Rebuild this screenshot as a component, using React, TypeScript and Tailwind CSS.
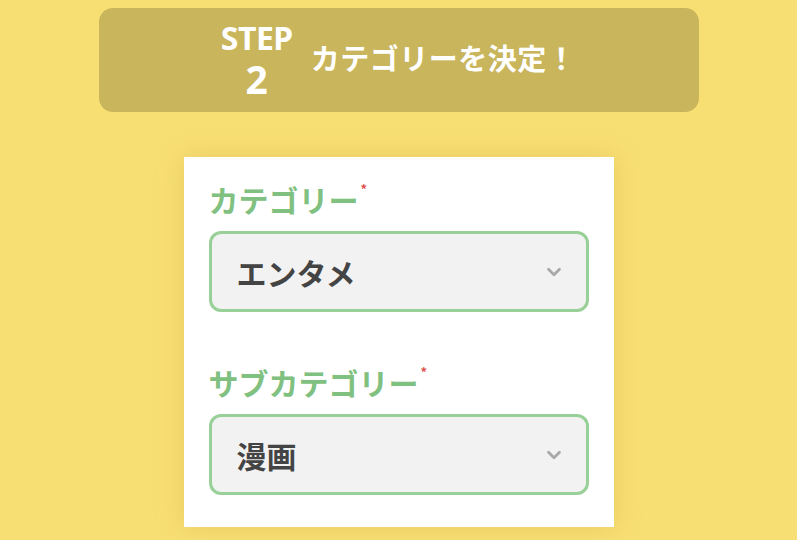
import { ChevronDown } from "lucide-react";

const jp = { fontFamily: '"Noto Sans CJK JP", "Noto Sans", sans-serif' };

function Field({ label, value }: { label: string; value: string }) {
  return (
    <div className="flex flex-col">
      <div className="flex items-start">
        <span className="text-[30px] font-bold leading-[36px] text-[#80c080]">{label}</span>
        <span className="text-[13px] font-bold leading-none text-[#e05050] mt-[1px] ml-[2px]">*</span>
      </div>
      <div className="mt-[14px] h-[81px] rounded-[12px] border-[3px] border-[#98d098] bg-[#f2f2f2] flex items-center justify-between pl-[25px] pr-[21px]">
        <span className="text-[30px] font-bold text-[#444444] leading-none">{value}</span>
        <ChevronDown className="w-[22px] h-[22px] text-[#a8a8a8]" strokeWidth={3} />
      </div>
    </div>
  );
}

export default function App() {
  return (
    <div className="min-h-screen w-full bg-[#f8df74] pt-[8px]" style={jp}>
      {/* step banner */}
      <div className="mx-auto w-[600px] h-[104px] rounded-[14px] bg-[#c9b55b] flex items-center justify-center gap-[18px]">
        <div className="flex flex-col items-center text-white font-bold" style={{ fontFamily: '"Noto Sans", sans-serif' }}>
          <span className="text-[32px] leading-[24px] tracking-[-0.5px]">STEP</span>
          <span className="text-[39px] leading-[30px] mt-[14px]">2</span>
        </div>
        <span className="text-[29px] font-bold text-white tracking-[0.5px] -mt-[4px]">カテゴリーを決定！</span>
      </div>

      {/* form card */}
      <div className="mx-auto mt-[45px] w-[430px] h-[370px] bg-white shadow-[0_0_24px_rgba(200,170,60,0.35)] pt-[24px] pl-[25px] pr-[25px] flex flex-col gap-[52px]">
        <Field label="カテゴリー" value="エンタメ" />
        <Field label="サブカテゴリー" value="漫画" />
      </div>
    </div>
  );
}
